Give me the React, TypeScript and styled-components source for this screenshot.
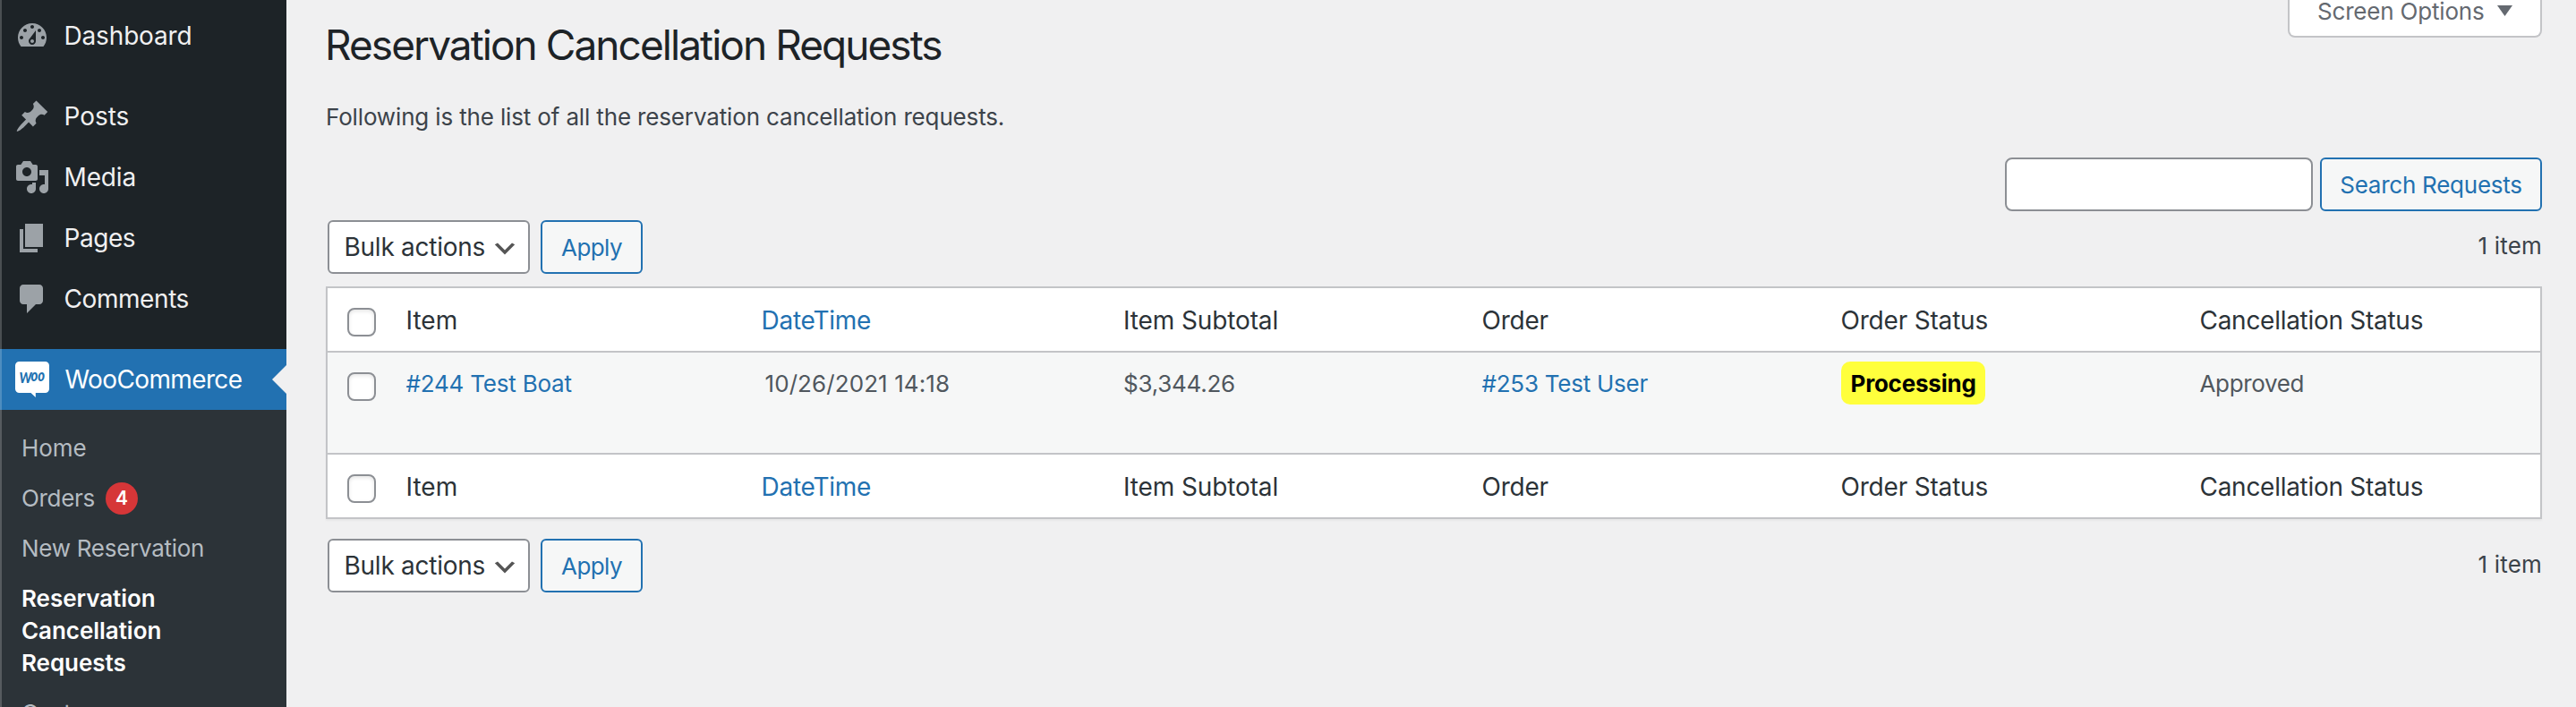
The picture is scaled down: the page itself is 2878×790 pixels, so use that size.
import React from "react";
import styled, { createGlobalStyle, css } from "styled-components";

const GlobalStyle = createGlobalStyle`
  *, *::before, *::after { box-sizing: border-box; }
  html, body { margin: 0; padding: 0; overflow: hidden; }
  body {
    background: #f0f0f1;
    color: #3c434a;
    font-family: Inter, "Liberation Sans", sans-serif;
    font-size: 26px;
  }
`;

const BLUE = "#2271b1";

const Page = styled.div`
  display: flex;
  width: 100%;
  height: 790px;
  overflow: hidden;
`;

/* Sidebar */

const Sidebar = styled.nav`
  position: relative;
  flex: 0 0 320px;
  height: 790px;
  padding-top: 6px;
  background: #1d2327;
  overflow: hidden;

  &::after {
    content: "";
    position: absolute;
    inset: 0 auto 0 0;
    width: 2px;
    background: rgba(255, 255, 255, 0.2);
  }
`;

const MenuItem = styled.a<{ $gap?: boolean; $current?: boolean; $track?: number }>`
  position: relative;
  display: flex;
  align-items: center;
  height: 68px;
  margin-top: ${(p) => (p.$gap ? 22 : 0)}px;
  padding-left: 16px;
  gap: ${(p) => (p.$current ? 16.5 : 15.5)}px;
  color: ${(p) => (p.$current ? "#fff" : "#f0f0f1")};
  background: ${(p) => (p.$current ? BLUE : "transparent")};
  font-size: 28px;
  line-height: 36px;
  letter-spacing: ${(p) => p.$track ?? 0}px;

  ${(p) =>
    p.$current &&
    css`
      &::after {
        content: "";
        position: absolute;
        right: 0;
        top: 18px;
        border: 16px solid transparent;
        border-left-width: 0;
        border-right-color: #f0f0f1;
      }
    `}
`;

const MenuIcon = styled.svg`
  flex: none;
  width: 40px;
  height: 40px;
  fill: #9ca2a7;
`;

const WooIcon = styled.svg`
  flex: none;
  width: 40px;
  height: 40px;
`;

const WooText = styled.text<{ $size: number }>`
  font: italic 900 ${(p) => p.$size}px Lato, sans-serif;
  letter-spacing: 0;
  fill: ${BLUE};
`;

const Submenu = styled.div`
  height: 400px;
  padding-top: 15px;
  background: #2c3338;
`;

const SubItem = styled.a<{ $current?: boolean; $track?: number }>`
  display: flex;
  align-items: center;
  width: 240px;
  padding: 10px 0 10px 24px;
  color: ${(p) => (p.$current ? "#fff" : "#b5bcc2")};
  font-weight: ${(p) => (p.$current ? 600 : 400)};
  line-height: 36px;
  letter-spacing: ${(p) => p.$track ?? 0}px;
  white-space: nowrap;
`;

const Count = styled.span`
  display: flex;
  align-items: center;
  justify-content: center;
  width: 36px;
  height: 36px;
  margin-left: 12px;
  border-radius: 50%;
  background: #d63638;
  color: #fff;
  font-size: 21px;
  font-weight: 600;
  letter-spacing: 0;
`;

/* Content */

const Main = styled.main`
  flex: 1;
  display: flex;
  flex-direction: column;
  min-width: 0;
  padding: 0 38px 0 44px;
`;

const TopRow = styled.header`
  display: flex;
  justify-content: space-between;
  align-items: flex-start;
  height: 111px;
`;

const Title = styled.h1`
  margin: 20px 0 0 -1px;
  color: #1d2327;
  font-size: 46px;
  font-weight: 400;
  line-height: 60px;
  letter-spacing: -1.95px;
  white-space: nowrap;
`;

const ScreenOptions = styled.button`
  display: flex;
  align-items: flex-start;
  gap: 14px;
  width: 284px;
  height: 42px;
  padding: 0 0 0 31px;
  border: 2px solid #c3c4c7;
  border-top: 0;
  border-radius: 0 0 8px 8px;
  background: #fff;
  color: #646970;
  font: 26px/26px Inter, sans-serif;
  letter-spacing: -0.19px;
  white-space: nowrap;
`;

const Triangle = styled.svg`
  width: 17px;
  height: 12px;
  margin-top: 6px;
  fill: #646970;
`;

const Intro = styled.p`
  margin: 0;
  height: 65px;
  line-height: 40px;
  letter-spacing: -0.15px;
`;

const SearchRow = styled.div`
  display: flex;
  justify-content: flex-end;
  gap: 8px;
  height: 70px;
`;

const SearchInput = styled.input`
  width: 344px;
  height: 60px;
  border: 2px solid #8c8f94;
  border-radius: 8px;
  background: #fff;
`;

const Button = styled.button<{ $width: number; $track: number }>`
  width: ${(p) => p.$width}px;
  height: 60px;
  padding: 2px 0 0;
  border: 2px solid ${BLUE};
  border-radius: 6px;
  background: #f6f7f7;
  color: ${BLUE};
  font: 26px/52px Inter, sans-serif;
  letter-spacing: ${(p) => p.$track}px;
  white-space: nowrap;
`;

const TableNav = styled.div`
  display: flex;
  height: 60px;
  padding-left: 2px;
  gap: 12px;
`;

const BulkSelect = styled.div`
  display: flex;
  align-items: center;
  justify-content: space-between;
  width: 226px;
  height: 60px;
  padding: 0 10px 0 16.5px;
  border: 2px solid #8c8f94;
  border-radius: 6px;
  background: #fff;
  color: #2c3338;
  font-size: 28px;
  letter-spacing: -0.26px;
  white-space: nowrap;
`;

const Chevron = styled.svg`
  flex: none;
  width: 32px;
  height: 32px;
  margin-top: 3px;
  fill: #555;
`;

const ItemCount = styled.span`
  margin-left: auto;
  line-height: 58px;
  letter-spacing: 0.2px;
`;

const Table = styled.section`
  display: flex;
  flex-direction: column;
  height: 260px;
  margin: 14px 0 22px;
  border: 2px solid #c3c4c7;
  background: #fff;
  box-shadow: 0 2px 2px rgba(0, 0, 0, 0.04);
`;

const Row = styled.div<{ $kind: "head" | "body" | "foot" }>`
  display: grid;
  grid-template-columns: 87.5px 397px 404.5px 400.5px 401px 401px 1fr;
  align-items: start;
  height: ${(p) => ({ head: 72, body: 114, foot: 70 })[p.$kind]}px;
  border-bottom: ${(p) => (p.$kind === "foot" ? "0" : "2px solid #c3c4c7")};
  background: ${(p) => (p.$kind === "body" ? "#f6f7f7" : "#fff")};
  color: ${(p) => (p.$kind === "body" ? "#50575e" : "#2c3338")};
  font-size: ${(p) => (p.$kind === "body" ? 26 : 28)}px;
`;

const Cell = styled.span<{ $track: number; $link?: boolean; $indent?: number; $top?: number }>`
  padding-top: ${(p) => p.$top ?? 16}px;
  padding-left: ${(p) => p.$indent ?? 0}px;
  line-height: 40px;
  letter-spacing: ${(p) => p.$track}px;
  color: ${(p) => (p.$link ? BLUE : "inherit")};
  white-space: nowrap;
`;

const Checkbox = styled.span`
  width: 32px;
  height: 32px;
  margin: 22px 0 0 22px;
  border: 2px solid #8c8f94;
  border-radius: 8px;
  background: #fff;
  box-shadow: inset 0 2px 4px rgba(0, 0, 0, 0.1);
`;

const StatusCell = styled.span`
  padding-top: 10px;
`;

const Status = styled.mark`
  display: inline-block;
  height: 48px;
  padding: 0 10px 0 11px;
  border-radius: 10px;
  background: #ffff3c;
  color: #000;
  font-weight: 700;
  line-height: 49px;
  letter-spacing: -0.21px;
  vertical-align: top;
`;

const menu = [
  {
    label: "Dashboard",
    track: -0.16,
    gap: false,
    d: "M3.76 16h12.48c1.1-1.37 1.76-3.11 1.76-5 0-4.42-3.58-8-8-8s-8 3.58-8 8c0 1.89.66 3.63 1.76 5zM10 4c.55 0 1 .45 1 1s-.45 1-1 1-1-.45-1-1 .45-1 1-1zM6 6c.55 0 1 .45 1 1s-.45 1-1 1-1-.45-1-1 .45-1 1-1zm8 0c.55 0 1 .45 1 1s-.45 1-1 1-1-.45-1-1 .45-1 1-1zm-5.37 5.55L12 7v6c0 1.1-.9 2-2 2s-2-.9-2-2c0-.57.24-1.08.63-1.45zM4 10c.55 0 1 .45 1 1s-.45 1-1 1-1-.45-1-1 .45-1 1-1zm12 0c.55 0 1 .45 1 1s-.45 1-1 1-1-.45-1-1 .45-1 1-1zm-5 3c0-.55-.45-1-1-1s-1 .45-1 1 .45 1 1 1 1-.45 1-1z",
  },
  {
    label: "Posts",
    track: -0.05,
    gap: true,
    d: "M10.44 3.02l1.82-1.82 6.36 6.35-1.83 1.82c-1.05-.68-2.48-.57-3.41.36l-.75.75c-.92.93-1.04 2.35-.35 3.41l-1.83 1.82-2.41-2.41-2.8 2.79c-.42.42-3.38 2.71-3.8 2.29s1.86-3.39 2.28-3.81l2.79-2.79L4.1 9.36l1.83-1.82c1.05.69 2.48.57 3.4-.36l.75-.75c.93-.92 1.05-2.35.36-3.41z",
  },
  {
    label: "Media",
    track: -0.14,
    gap: false,
    d: "M13 11V4c0-.55-.45-1-1-1h-1.67L9 1H5L3.67 3H2c-.55 0-1 .45-1 1v7c0 .55.45 1 1 1h10c.55 0 1-.45 1-1zM7 4.5c1.38 0 2.5 1.12 2.5 2.5S8.38 9.5 7 9.5 4.5 8.38 4.5 7 5.62 4.5 7 4.5zM14 6h5v10.5c0 1.38-1.12 2.5-2.5 2.5S14 17.88 14 16.5s1.12-2.5 2.5-2.5c.17 0 .34.02.5.05V9h-3V6zm-4 8.05V13h2v3.5c0 1.38-1.12 2.5-2.5 2.5S7 17.88 7 16.5 8.12 14 9.5 14c.17 0 .34.02.5.05z",
  },
  {
    label: "Pages",
    track: -0.45,
    gap: false,
    d: "M6 15V2h10v13H6zm-1 1h8v2H3V5h2v11z",
  },
  {
    label: "Comments",
    track: -0.42,
    gap: false,
    d: "M5 2h9c1.1 0 2 .9 2 2v7c0 1.1-.9 2-2 2h-2l-5 5v-5H5c-1.1 0-2-.9-2-2V4c0-1.1.9-2 2-2z",
  },
];

const columns = [
  { label: "Item", track: 0 },
  { label: "DateTime", track: -0.26, link: true },
  { label: "Item Subtotal", track: -0.12 },
  { label: "Order", track: -0.24 },
  { label: "Order Status", track: -0.19 },
  { label: "Cancellation Status", track: -0.28 },
];

function HeadingRow({ kind }: { kind: "head" | "foot" }) {
  return (
    <Row $kind={kind}>
      <Checkbox />
      {columns.map((c) => (
        <Cell key={c.label} $track={c.track} $link={c.link}>
          {c.label}
        </Cell>
      ))}
    </Row>
  );
}

function BulkActions() {
  return (
    <TableNav>
      <BulkSelect>
        Bulk actions
        <Chevron viewBox="0 0 20 20">
          <path d="M5 6l5 5 5-5 2 1-7 7-7-7 2-1z" />
        </Chevron>
      </BulkSelect>
      <Button $width={114} $track={-0.6}>Apply</Button>
      <ItemCount>1 item</ItemCount>
    </TableNav>
  );
}

export default function App() {
  return (
    <>
      <GlobalStyle />
      <Page>
        <Sidebar>
          {menu.map((m) => (
            <MenuItem key={m.label} $gap={m.gap} $track={m.track}>
              <MenuIcon viewBox="0 0 20 20">
                <path fillRule="evenodd" d={m.d} />
              </MenuIcon>
              {m.label}
            </MenuItem>
          ))}
          <MenuItem $gap $current $track={-0.62}>
            <WooIcon viewBox="0 0 40 40">
              <path
                fill="#fff"
                d="M5.500 0H34.500A4.500 4.500 0 0 1 39 4.500V30.500A4.500 4.500 0 0 1 34.500 35H23.800V40L18.500 35H5.500A4.500 4.500 0 0 1 1 30.500V4.500A4.500 4.500 0 0 1 5.500 0Z"
              />
              <WooText $size={16.5} x="5.500" y="23.500" textLength="14" lengthAdjust="spacingAndGlyphs">
                W
              </WooText>
              <WooText $size={18} x="18.500" y="22" textLength="15.500" lengthAdjust="spacingAndGlyphs">
                oo
              </WooText>
            </WooIcon>
            WooCommerce
          </MenuItem>
          <Submenu>
            <SubItem $track={-0.06}>Home</SubItem>
            <SubItem $track={-0.32}>
              Orders <Count>4</Count>
            </SubItem>
            <SubItem $track={-0.28}>New Reservation</SubItem>
            <SubItem $current $track={-0.04}>
              Reservation
              <br />
              Cancellation
              <br />
              Requests
            </SubItem>
            <SubItem $track={-0.28}>Customers</SubItem>
          </Submenu>
        </Sidebar>

        <Main>
          <TopRow>
            <Title>Reservation Cancellation Requests</Title>
            <ScreenOptions>
              Screen Options
              <Triangle viewBox="0 0 17 12">
                <path d="M0 0H17L8.500 12Z" />
              </Triangle>
            </ScreenOptions>
          </TopRow>
          <Intro>Following is the list of all the reservation cancellation requests.</Intro>
          <SearchRow>
            <SearchInput />
            <Button $width={248} $track={-0.25}>Search Requests</Button>
          </SearchRow>
          <BulkActions />
          <Table>
            <HeadingRow kind="head" />
            <Row $kind="body">
              <Checkbox />
              <Cell $top={15} $track={-0.21} $link>#244 Test Boat</Cell>
              <Cell $top={15} $track={0.09} $indent={4}>10/26/2021 14:18</Cell>
              <Cell $top={15} $track={-0.26}>$3,344.26</Cell>
              <Cell $top={15} $track={-0.25} $link>#253 Test User</Cell>
              <StatusCell>
                <Status>Processing</Status>
              </StatusCell>
              <Cell $top={15} $track={-0.35}>Approved</Cell>
            </Row>
            <HeadingRow kind="foot" />
          </Table>
          <BulkActions />
        </Main>
      </Page>
    </>
  );
}
